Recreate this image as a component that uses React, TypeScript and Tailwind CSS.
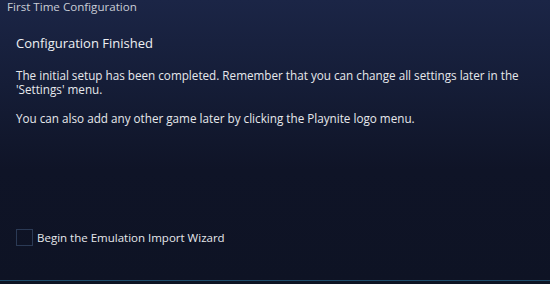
import React from "react";

export default function App() {
  return (
    <div
      className="w-[550px] h-[284px] overflow-hidden flex flex-col text-[#e6e8ec] bg-[linear-gradient(180deg,#1b2546_0%,#151d37_30%,#0f1427_60%,#0e1324_100%)]"
      style={{ fontFamily: '"Open Sans", "Noto Sans", sans-serif' }}
    >
      <div className="h-[13px] pl-[7px] text-[11.6px]/[13px] text-[#c9cdd6] whitespace-nowrap">First Time Configuration</div>
      <div className="flex-1 flex flex-col px-[16px]">
        <div className="mt-[22px] text-[13px]/[17px] text-[#eef0f3]">Configuration Finished</div>
        <div className="mt-[16px] text-[11.7px]/[14px]">
          The initial setup has been completed. Remember that you can change all settings later in the
          'Settings' menu.
        </div>
        <div className="mt-[15px] text-[11.7px]/[14px]">
          You can also add any other game later by clicking the Playnite logo menu.
        </div>
        <div className="mt-auto mb-[34px] flex items-center gap-[4px]">
          <div className="w-[17px] h-[17px] border border-[#2b3a55]" />
          <span className="text-[11.5px]/[17px]">Begin the Emulation Import Wizard</span>
        </div>
      </div>
      <div className="h-[1px] bg-[#1f4c6b]" />
      <div className="h-[3px] bg-[#0d1424]" />
    </div>
  );
}
